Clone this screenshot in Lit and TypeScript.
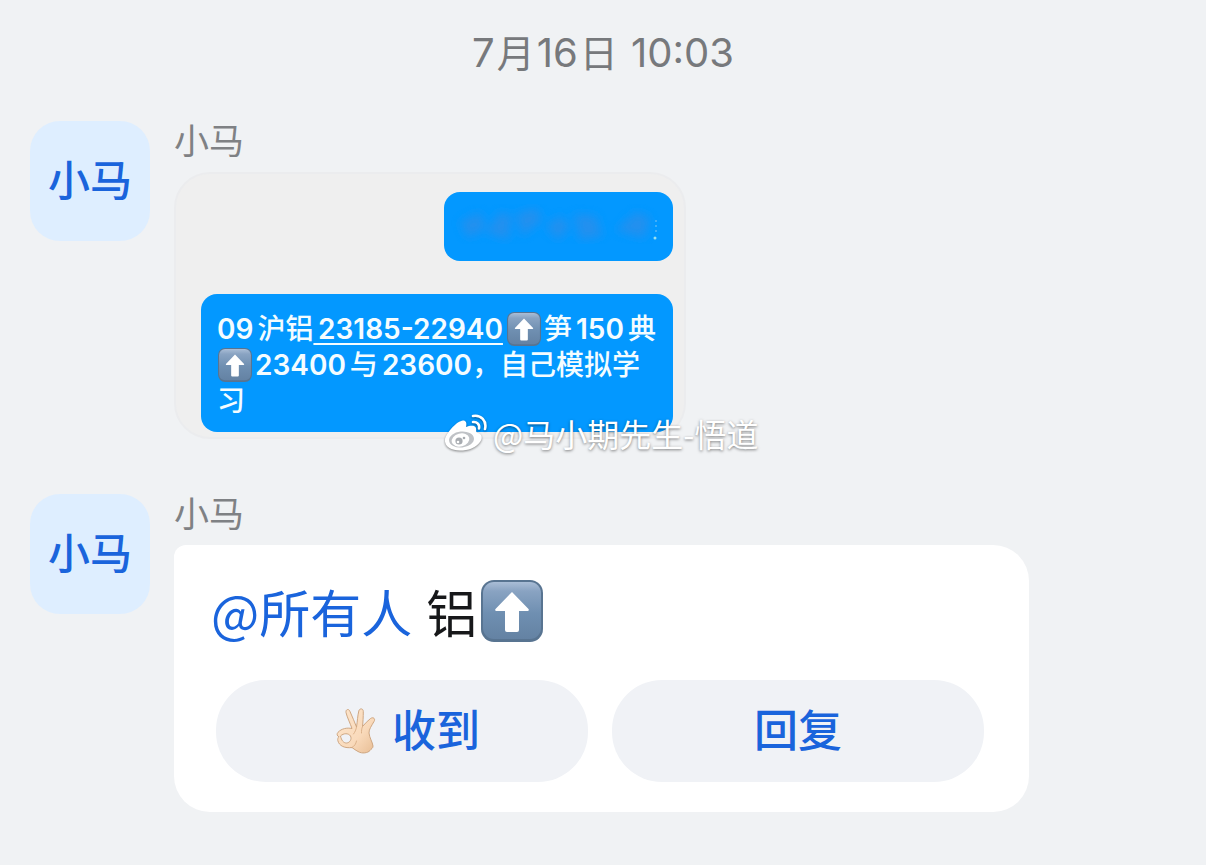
import { LitElement, html, svg, css } from "lit";
import { customElement, property } from "lit/decorators.js";

@customElement("arrow-emoji")
class ArrowEmoji extends LitElement {
  static styles = css`
    :host { display: inline-block; }
    svg { display: block; width: 100%; height: 100%; }
  `;
  render() {
    return html`<svg viewBox="0 0 62 62" role="img" aria-label="⬆️">
      <defs>
        <linearGradient id="face" x1="0" y1="0" x2="0" y2="1">
          <stop offset="0" stop-color="#a9bdd6" />
          <stop offset="0.16" stop-color="#89a3c2" />
          <stop offset="0.55" stop-color="#6f8fb1" />
          <stop offset="1" stop-color="#6482a3" />
        </linearGradient>
      </defs>
      <rect x="0" y="0" width="62" height="62" rx="13" fill="#587491" />
      <rect x="2" y="2" width="58" height="57" rx="11" fill="url(#face)" />
      <path d="M31 12 L47.500 29 Q48.500 31 46.500 31 H38 V50 Q38 52 36 52 H26 Q24 52 24 50 V31 H15.500 Q13.500 31 14.500 29 Z" fill="#fff" />
    </svg>`;
  }
}

@customElement("chat-message")
class ChatMessage extends LitElement {
  @property() name = "";
  static styles = css`
    :host { display: flex; align-items: flex-start; gap: 24px; }
    .avatar {
      flex: none; width: 120px; height: 120px; border-radius: 30px;
      background: #deeeff; color: #1a64dc;
      display: flex; align-items: center; justify-content: center;
      font-size: 42px; line-height: 60px; font-weight: 500;
    }
    .body { flex: 1; min-width: 0; display: flex; flex-direction: column; gap: 11px; }
    .name { font-size: 35px; line-height: 40px; color: #7f8184; }
  `;
  render() {
    return html`
      <div class="avatar" aria-hidden="true">${this.name}</div>
      <div class="body">
        <div class="name">${this.name}</div>
        <slot></slot>
      </div>`;
  }
}

const weiboMark = svg`
  <path d="M1 25 C3 18 13 7 19 6.500 C22 6.500 23 9 22 13 C26 11.500 31 11 32 14 C32.500 16 31.500 18 33 18.500 C38 20 39 24 36 28 C32 34 24 36.500 16 36.500 C8 36.500 0 33 1 25 Z" fill="#fff" />
  <ellipse cx="17.500" cy="25.500" rx="12.500" ry="8" fill="#bfc2c6" transform="rotate(-6 17.500 25.500)" />
  <ellipse cx="16.500" cy="26" rx="9" ry="6.500" fill="#fff" transform="rotate(-15 16.500 26)" />
  <circle cx="15" cy="27" r="3.600" fill="#a7abb0" />
  <circle cx="14" cy="28" r="1.300" fill="#fff" />
  <circle cx="20" cy="24" r="1.300" fill="#a7abb0" />
  <path d="M29 8 C33 7.500 36 10.500 35 14.500" fill="none" stroke="#fff" stroke-width="2.600" stroke-linecap="round" />
  <path d="M29 2 C37 0.500 43 7 41 15" fill="none" stroke="#fff" stroke-width="2.600" stroke-linecap="round" />`;

const okHand = html`<svg class="hand" viewBox="0 0 40 46" aria-hidden="true">
  <defs>
    <linearGradient id="skin" x1="0" y1="0" x2="1" y2="1">
      <stop offset="0" stop-color="#fde6cd" />
      <stop offset="0.6" stop-color="#f9dabb" />
      <stop offset="1" stop-color="#e8bd94" />
    </linearGradient>
  </defs>
  <path fill="url(#skin)" stroke="#c99f78" stroke-width="0.900" stroke-linejoin="round"
    d="M16 20.500 C14 15 11 9 10 4.500 C9.500 1 13 0.500 14 3.500 C16.500 9 18.500 14 20.500 19 C21.500 13 21.500 8 22.800 3 C23.500 0 27.300 0.200 27.300 3.500 C27.300 9 27 14 26.500 18.500 C29 15.500 31.500 13 34.500 10.500 C37.500 8.500 39.700 11 38 13.500 C35.500 18 33 21 33 25 C33.500 30 36.500 34 37 38 C37.300 40 35 41 34 42.500 C32 45 26 46 22 43.500 C20 42.500 18 41 16 39.500 C9 40.500 3 38 1.800 32.500 C1.500 31 2 29.500 3 28.800 C1 28 0.500 26 2 24.300 C5.500 20.500 11 19.500 16 20.500 Z" />
  <path fill="#f0f2f6" stroke="#c99f78" stroke-width="0.900" d="M4.500 28 C7.500 25 12.500 25 14.500 28 C16 31 14 34.800 10.500 35 C7.500 35 5.500 32.500 4.500 28 Z" />
  <path d="M20.500 19 C20 22 19 24 17.500 26 M26.500 18.500 C25.500 21 25.500 23 25.500 25 M16 39.500 C18.500 38 20 36 20.500 33" fill="none" stroke="#d9ae86" stroke-width="0.900" stroke-linecap="round" />
</svg>`;

@customElement("app-root")
class AppRoot extends LitElement {
  static styles = css`
    :host {
      display: block; min-height: 100vh; box-sizing: border-box;
      padding: 28px 30px 53px; background: #f0f2f4;
      font-family: Inter, "Noto Sans CJK SC", sans-serif;
    }
    .date { display: block; text-align: center; font-size: 40px; line-height: 50px; color: #77797c; margin-bottom: 43px; }
    .unit { font-size: 38px; margin: 0 2px; }
    .chat { display: flex; flex-direction: column; gap: 55px; }
    .gap { margin-inline-start: 4px; }
    .picture {
      position: relative; box-sizing: border-box; max-width: 512px;
      border: 2px solid #ebecee; border-radius: 36px; background: #efefef;
      padding: 18px 11px 5px 25px;
      display: flex; flex-direction: column; gap: 33px;
    }
    .blue { background: #0398ff; border-radius: 16px; }
    .redacted { align-self: flex-end; width: 229px; height: 69px; }
    .redacted svg { display: block; width: 100%; height: 100%; }
    .quote {
      padding: 17px 16px 13px; color: #f4fcff;
      font-size: 28px; line-height: 36px; font-weight: 600;
    }
    .cjk { font-weight: 500; }
    .quote p { margin: 0; white-space: nowrap; }
    .quote a { color: inherit; text-decoration: underline; text-decoration-thickness: 2px; text-underline-offset: 4px; text-decoration-skip-ink: none; }
    .quote arrow-emoji { width: 34px; height: 34px; vertical-align: -7px; margin: 0 3px 0 1px; }
    .quote a + arrow-emoji { margin-inline-start: 4px; }
    .mark {
      position: absolute; left: 268px; top: 237px; white-space: nowrap;
      display: flex; align-items: center; gap: 5px;
      color: #fff; font-size: 32px; line-height: 44px;
      font-family: "Noto Sans CJK SC", sans-serif;
      text-shadow: 0 1px 3px rgba(0, 0, 0, 0.5);
    }
    .mark svg { width: 44px; height: 38px; filter: drop-shadow(0 1px 1px rgba(0, 0, 0, 0.45)); }
    .card {
      box-sizing: border-box; max-width: 855px;
      padding: 28px 45px 30px 42px; background: #fff;
      border-radius: 12px 36px 36px 36px;
    }
    .text {
      margin: 0 0 31px -5px; display: flex; align-items: center;
      font-family: "Noto Sans CJK SC", sans-serif;
      font-size: 51px; line-height: 76px; color: #17181a;
    }
    .text a { color: #1a64dc; text-decoration: none; margin-inline-end: 14px; }
    .text arrow-emoji { width: 62px; height: 62px; margin-inline-start: 4px; }
    .actions { display: grid; grid-template-columns: 1fr 1fr; gap: 24px; }
    button {
      display: flex; align-items: center; justify-content: center; gap: 16px;
      border: 0; border-radius: 50px; padding: 20px 16px; background: #f0f2f6;
      color: #1a64dc; font-family: inherit; font-size: 44px; line-height: 62px; font-weight: 500;
    }
    .hand { width: 40px; height: 46px; flex: none; margin-inline-start: 12px; }
  `;

  render() {
    return html`
      <time class="date">7<span class="unit">月</span>16<span class="unit">日</span> 10:03</time>
      <main class="chat">
        <chat-message name="小马">
          <div class="picture">
            <div class="blue redacted">
              <svg viewBox="0 0 229 69" aria-hidden="true">
                <defs><filter id="soft"><feGaussianBlur stdDeviation="5" /></filter></defs>
                <g fill="#2a8eea" filter="url(#soft)" opacity="0.800">
                  <path d="M16 30 L36 20 L42 36 L24 46 Z" />
                  <path d="M42 40 L56 20 L68 24 L64 48 Z" />
                  <path d="M72 22 L92 16 L98 28 L78 44 Z" />
                  <path d="M102 34 L116 24 L126 34 L114 48 Z" />
                  <path d="M130 22 L152 24 L158 44 L136 48 Z" />
                  <path d="M172 38 L192 20 L206 26 L200 46 Z" />
                </g>
                <path d="M212 28 V42" stroke="#7cc4f4" stroke-width="1" stroke-dasharray="2 3" />
                <circle cx="211" cy="46" r="1.500" fill="#9be0ee" />
              </svg>
            </div>
            <div class="blue quote">
              <p>09<span class="cjk gap">沪铝</span><a href="#">&#8198;23185-22940</a><arrow-emoji></arrow-emoji><span class="cjk">笋</span><span class="gap">150</span><span class="cjk gap">典</span></p>
              <p><arrow-emoji></arrow-emoji>23400<span class="cjk gap">与</span><span class="gap">23600</span><span class="cjk">，自己模拟学</span></p>
              <p class="cjk">习</p>
            </div>
            <div class="mark"><svg viewBox="0 0 44 38" aria-hidden="true">${weiboMark}</svg>@马小期先生-悟道</div>
          </div>
        </chat-message>
        <chat-message name="小马">
          <div class="card">
            <p class="text"><a href="#">@所有人</a>铝<arrow-emoji></arrow-emoji></p>
            <div class="actions">
              <button type="button">${okHand}收到</button>
              <button type="button">回复</button>
            </div>
          </div>
        </chat-message>
      </main>`;
  }
}
